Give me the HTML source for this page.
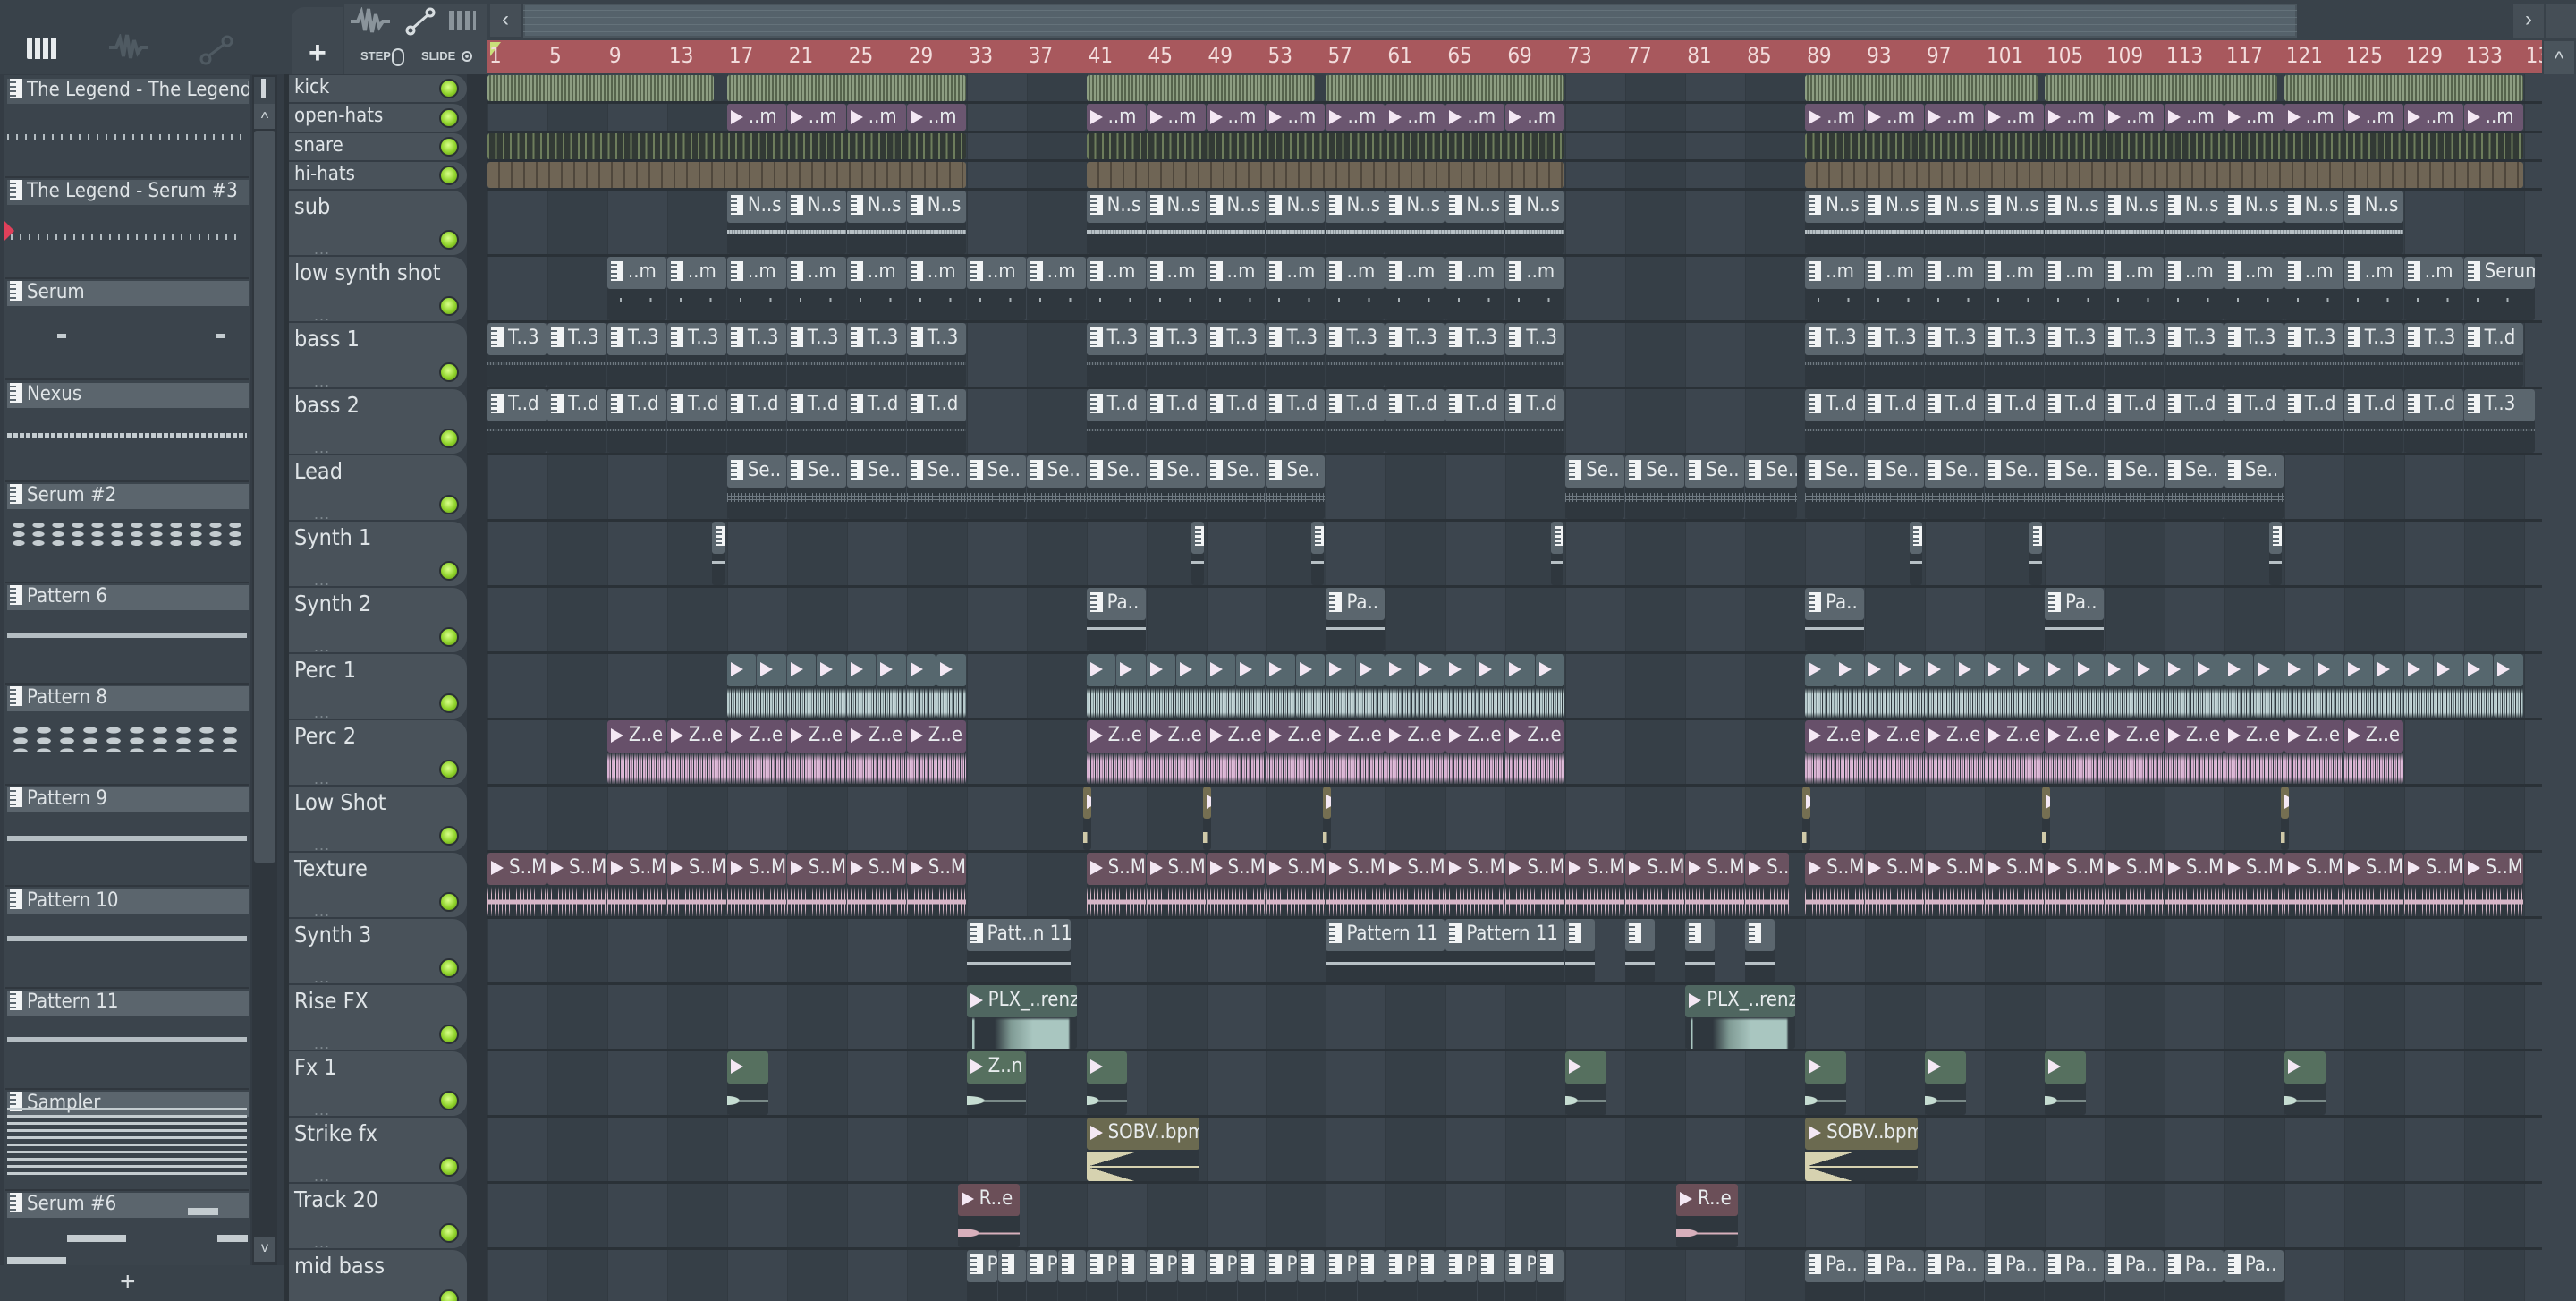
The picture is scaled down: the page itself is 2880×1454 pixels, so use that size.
<!DOCTYPE html>
<html><head><meta charset="utf-8">
<style>
*{margin:0;padding:0;box-sizing:border-box}
html,body{width:2880px;height:1454px;overflow:hidden;background:#343c44;font-family:"Liberation Sans","DejaVu Sans",sans-serif}
#root{position:relative;width:2880px;height:1454px}
.a{position:absolute}
.lbl{color:#dfe4e7;font-size:22px;white-space:nowrap;font-family:"DejaVu Sans Condensed","Liberation Sans Narrow","Liberation Sans",sans-serif}
.clip{position:absolute;overflow:hidden;border-radius:3px}
.ch{position:absolute;left:0;right:0;top:0;height:36px;border-radius:3px;color:#e8ecee;font-size:22px;line-height:34px;padding-left:4px;white-space:nowrap;overflow:hidden;font-family:"DejaVu Sans Condensed","Liberation Sans",sans-serif}
.pi{display:inline-block;width:14px;height:22px;background:#f2f4f5;vertical-align:-4px;margin-right:5px;background-image:repeating-linear-gradient(180deg,#f2f4f5 0 3px,#5b666e 3px 5px);background-size:7px 100%;background-repeat:no-repeat;background-position:left}
.ai{display:inline-block;width:0;height:0;border-top:8px solid transparent;border-bottom:8px solid transparent;border-left:14px solid #f4e8f4;margin-right:6px;vertical-align:-2px}
</style></head><body><div id="root"></div>
<script>
var R=document.getElementById('root');
function el(css,html,cls){var d=document.createElement('div');d.className='a '+(cls||'');d.style.cssText=css;if(html)d.innerHTML=html;R.appendChild(d);return d;}
var GX=545,BW=16.74;
function bx(b){return GX+(b-1)*BW;}
el('left:0;top:0;width:2880px;height:83px;background:#39424a');
el('left:0;top:83px;width:318px;height:1371px;background:#343c44');
el('left:30px;top:42px;width:34px;height:24px;background:#e8ecee;border-radius:2px;background-image:repeating-linear-gradient(90deg,#e8ecee 0 6px,#39424a 6px 9px)');
el('left:120px;top:38px;width:46px;height:30px','<svg width="46" height="30"><path d="M2 15h8l4-10 4 20 4-24 4 26 4-20 4 14 4-6h8" stroke="#4f5a62" stroke-width="4" fill="none"/></svg>');
el('left:222px;top:38px;width:40px;height:36px','<svg width="40" height="36"><circle cx="8" cy="28" r="5" stroke="#4f5a62" stroke-width="3" fill="none"/><circle cx="32" cy="8" r="5" stroke="#4f5a62" stroke-width="3" fill="none"/><path d="M12 24L28 12" stroke="#4f5a62" stroke-width="3"/></svg>');
el('left:326px;top:8px;width:58px;height:75px;background:#3f4850;border-radius:14px 0 0 0');
el('left:345px;top:40px;color:#e8ecee;font-size:34px;font-weight:bold','+');
el('left:385px;top:5px;width:160px;height:78px;background:#414a52');
el('left:390px;top:8px;width:52px;height:32px','<svg width="52" height="32"><path d="M2 16h8l4-10 4 20 4-24 4 26 4-20 4 14 4-6h8" stroke="#8a949b" stroke-width="4" fill="none"/></svg>');
el('left:452px;top:8px;width:36px;height:32px','<svg width="36" height="32"><circle cx="7" cy="26" r="4" stroke="#d7dde0" stroke-width="3" fill="none"/><circle cx="29" cy="6" r="4" stroke="#d7dde0" stroke-width="3" fill="none"/><path d="M10 23L26 9" stroke="#d7dde0" stroke-width="3"/></svg>');
el('left:502px;top:12px;width:30px;height:22px;background:#8a949b;background-image:repeating-linear-gradient(90deg,#8a949b 0 6px,#414a52 6px 9px)');
el('left:403px;top:55px;color:#cfd6da;font-size:13px;font-weight:bold','STEP');
el('left:438px;top:54px;width:14px;height:20px;border:2px solid #cfd6da;border-radius:7px');
el('left:471px;top:55px;color:#cfd6da;font-size:13px;font-weight:bold','SLIDE');
el('left:516px;top:57px;width:12px;height:12px;border:2px solid #cfd6da;border-radius:50%;background:radial-gradient(#cfd6da 30%,transparent 35%)');
el('left:548px;top:5px;width:34px;height:36px;background:#454e56;color:#cfd6da;font-size:24px;text-align:center;line-height:34px','&#x2039;');
el('left:585px;top:4px;width:1983px;height:38px;background:#55626b;border:2px solid #4a555d');
el('left:585px;top:4px;width:1983px;height:38px;background-image:repeating-linear-gradient(180deg,transparent 0 7px,#6b7880 7px 8px);opacity:.7');
el('left:2810px;top:4px;width:34px;height:38px;background:#454e56;color:#cfd6da;font-size:24px;text-align:center;line-height:36px','&#x203A;');
el('left:2846px;top:4px;width:34px;height:38px;background:#454e56');
el('left:545px;top:45px;width:2297px;height:37px;background:#a8585d');
el('left:548px;top:47px;width:0;height:0;border-top:16px solid #c9e07a;border-right:12px solid transparent');
for(var b=1;b<=137;b+=4){var x=bx(b);el('left:'+(x+(b==1?2:2))+'px;top:48px;color:#f2dcdc;font-size:24px;font-family:DejaVu Sans Condensed,Liberation Sans,sans-serif',''+b);}
el('left:2842px;top:45px;width:38px;height:1409px;background:#3a434b');
el('left:2844px;top:46px;width:34px;height:38px;background:#4a545c;color:#cfd6da;font-size:22px;text-align:center;line-height:40px','^');
el('left:2844px;top:86px;width:34px;height:62px;background:#4f5961;border-radius:3px');
el('left:2844px;top:1410px;width:34px;height:40px;background:#4a545c;color:#cfd6da;font-size:22px;text-align:center;line-height:36px','v');
el('left:545px;top:83px;width:2297px;height:1371px;background:#363f47;overflow:hidden');
for(var b=1;b<=137;b+=8){el('left:'+bx(b)+'px;top:83px;width:'+(4*BW)+'px;height:1371px;background:#3c454e');}
for(var b=1;b<=137;b+=4){el('left:'+bx(b)+'px;top:83px;width:1px;height:1371px;background:#323a41');}
el('left:522px;top:83px;width:23px;height:1371px;background:#2e353c');
var tracks=[['kick',83,32],['open-hats',115,33],['snare',148,32],['hi-hats',180,32],['sub',212,74],['low synth shot',286,74],['bass 1',360,74],['bass 2',434,74],['Lead',508,74],['Synth 1',582,74],['Synth 2',656,74],['Perc 1',730,74],['Perc 2',804,74],['Low Shot',878,74],['Texture',952,74],['Synth 3',1026,74],['Rise FX',1100,74],['Fx 1',1174,74],['Strike fx',1248,74],['Track 20',1322,74],['mid bass',1396,74]];
tracks.forEach(function(t){
 el('left:545px;top:'+(t[1]+t[2]-2)+'px;width:2297px;height:3px;background:#2a3137');
 el('left:323px;top:'+(t[1]+1)+'px;width:199px;height:'+(t[2]-2)+'px;background:#49525a;border-radius:0 16px 16px 0');
 el('left:329px;top:'+(t[1]+(t[2]<40?2:4))+'px;font-size:'+(t[2]<40?22:25)+'px','<span>'+t[0]+'</span>','lbl');
 var ly=t[2]<40?t[1]+t[2]/2:t[1]+56;
 el('left:491px;top:'+(ly-11)+'px;width:22px;height:22px;border-radius:50%;background:radial-gradient(circle at 45% 40%,#d8ff8a,#8fd22a 55%,#5b8a18);border:2px solid #2a3036');
 if(t[2]>40)el('left:351px;top:'+(t[1]+56)+'px;color:#7d878e;font-size:18px;letter-spacing:1px','...');
});
var T={};tracks.forEach(function(t){T[t[0]]=t;});
function clip(tn,s,e,st,label,icon){
 var t=T[tn];var x=bx(s),w=(e-s)*BW-1;var y=t[1]+1,h=t[2]-3;
 var d=el('left:'+x+'px;top:'+y+'px;width:'+w+'px;height:'+h+'px;background:'+st.body,'', 'clip');
 if(st.wave){var wv=document.createElement('div');wv.className='a';wv.style.cssText='left:0;right:0;'+st.wave;d.appendChild(wv);}
 if(label!==null&&label!==undefined){var hh=document.createElement('div');hh.className='ch';hh.style.background=st.head;if(t[2]<40){hh.style.height=h+'px';hh.style.lineHeight=h+'px';}
  hh.innerHTML=(icon=='p'?'<span class="pi" style="background-color:#f2f4f5"></span>':'<span class="ai"></span>')+label;d.appendChild(hh);}
 return d;
}
function seq(tn,s,e,step,st,label,icon){for(var b=s;b<e-0.01;b+=step)clip(tn,b,Math.min(b+step,e),st,label,icon);}
var KICK={body:'#65745b',wave:'top:0;bottom:0;background:repeating-linear-gradient(90deg,#8d9e82 0 2px,#55634c 2px 4px)'};
var OH={head:'#6b5670',body:'#6b5670'};
var SN={body:'#323a35',wave:'top:0;bottom:0;background:repeating-linear-gradient(90deg,#6d7d5c 0 2px,transparent 2px 8.4px)'};
var HH={body:'#6f6555',wave:'top:0;bottom:0;background:repeating-linear-gradient(90deg,transparent 0 12px,#4f473c 12px 14px)'};
function line(c,top,hgt){return 'top:'+top+'px;height:'+hgt+'px;background:'+c;}
var SUB={head:'#5b666e',body:'#2f373e',wave:line('repeating-linear-gradient(90deg,#b7c0c5 0 2px,#8a949a 2px 3px)',44,4)};
var LSS={head:'#5b666e',body:'#2f373e',wave:'top:46px;height:4px;background:repeating-linear-gradient(90deg,transparent 0 14px,#aab3b8 14px 16px,transparent 16px 33.5px)'};
var BASS={head:'#5b666e',body:'#2f373e',wave:line('repeating-linear-gradient(90deg,#6e7880 0 1px,#3a434a 1px 3px)',44,3)};
var LEAD={head:'#5b666e',body:'#2f373e',wave:'top:42px;height:10px;background:repeating-linear-gradient(90deg,#707a82 0 1px,transparent 1px 4px),repeating-linear-gradient(180deg,transparent 0 3px,#707a82 3px 4px)'};
var PERC1={head:'#56676e',body:'#2f383e',wave:'top:38px;height:34px;background:repeating-linear-gradient(90deg,#b8cbcd 0 2px,#7a8c90 2px 3px,#c8d8da 3px 4px,transparent 4px 5px);-webkit-mask:linear-gradient(180deg,transparent 0,#000 20%,#000 80%,transparent)'};
var PERC2={head:'#67506a',body:'#2f373e',wave:'top:36px;height:36px;background:repeating-linear-gradient(90deg,#d8b2d2 0 2px,#9c7e98 2px 3px,#e0c0da 3px 4px,transparent 4px 5px);-webkit-mask:linear-gradient(180deg,transparent 0,#000 25%,#000 75%,transparent)'};
var TEX={head:'#6a5260',body:'#2f373e',wave:'top:38px;height:34px;background:linear-gradient(180deg,transparent 42%,#d6b6c6 42% 58%,transparent 58%),repeating-linear-gradient(90deg,#d6b6c6 0 1px,transparent 1px 4px,#d6b6c6 4px 5px,transparent 5px 8px);-webkit-mask:linear-gradient(180deg,transparent 0,#000 25%,#000 75%,transparent)'};
var S1={head:'#5b666e',body:'#2f373e',wave:line('#b7c0c5',44,3)};
var SY3={head:'#5b666e',body:'#2f373e',wave:line('#b7c0c5',48,4)};
var RISE={head:'#4f6660',body:'#2f373e',wave:'top:36px;height:36px;background:linear-gradient(90deg,transparent 5%,#a9c6c0 5% 7%,transparent 7% 25%,#7f9a94 40%,#a9c6c0 60%,#a9c6c0 92%,transparent 94%);-webkit-mask:linear-gradient(180deg,transparent 0,#000 10%,#000 95%)'};
var FX={head:'#56705f',body:'#2f373e',wave:'top:38px;height:34px;background:radial-gradient(ellipse at 0 50%,#c6ddd2 0,#c6ddd2 20%,transparent 22%),linear-gradient(180deg,transparent 48%,#c6ddd2 48% 54%,transparent 54%)'};
var STR={head:'#6b6a50',body:'#2f373e',wave:'top:38px;height:34px;background:linear-gradient(180deg,transparent 47%,#d6d2b0 47% 53%,transparent 53%),linear-gradient(to right bottom,#d6d2b0 50%,transparent 50%) 0 0/45% 50% no-repeat,linear-gradient(to right top,#d6d2b0 50%,transparent 50%) 0 100%/45% 50% no-repeat'};
var T20={head:'#6b4f58',body:'#2f373e',wave:'top:38px;height:34px;background:radial-gradient(ellipse at 10% 50%,#d8b0bc 0,#d8b0bc 18%,transparent 20%),linear-gradient(180deg,transparent 48%,#d8b0bc 48% 54%,transparent 54%)'};
var LS={head:'#756f52',body:'#2f373e',wave:'top:42px;height:30px;background:linear-gradient(to right,#cfc9a8 50%,transparent 50%) 0 50%/100% 40% no-repeat'};
var MB={head:'#5b666e',body:'#2f373e',wave:line('#b7c0c5',62,4)};
[[1,16.2],[17,33],[41,56.3],[57,73],[89,104.6],[105,120.6],[121,137]].forEach(function(r){clip('kick',r[0],r[1],KICK);});
[[17,33],[41,73],[89,137]].forEach(function(r){seq('open-hats',r[0],r[1],4,OH,'..m','a');});
[[1,33],[41,73],[89,137]].forEach(function(r){clip('snare',r[0],r[1],SN);clip('hi-hats',r[0],r[1],HH);});
[[17,33],[41,73],[89,129]].forEach(function(r){seq('sub',r[0],r[1],4,SUB,'N..s','p');});
[[9,73],[89,133]].forEach(function(r){seq('low synth shot',r[0],r[1],4,LSS,'..m','p');});clip('low synth shot',133,137.8,LSS,'Serum','p');
[[1,33],[41,73],[89,133]].forEach(function(r){seq('bass 1',r[0],r[1],4,BASS,'T..3','p');seq('bass 2',r[0],r[1],4,BASS,'T..d','p');});
clip('bass 1',133,137,BASS,'T..d','p');clip('bass 2',133,137.8,BASS,'T..3','p');
[[17,57],[73,88.5],[89,121]].forEach(function(r){seq('Lead',r[0],r[1],4,LEAD,'Se..','p');});
[16,48,56,72,96,104,120].forEach(function(b){clip('Synth 1',b,b+0.9,S1,'','p');});
[41,57,89,105].forEach(function(b){clip('Synth 2',b,b+4,S1,'Pa..','p');});
[[17,33],[41,73],[89,137]].forEach(function(r){seq('Perc 1',r[0],r[1],2,PERC1,'','a');});
[[9,33],[41,73],[89,129]].forEach(function(r){seq('Perc 2',r[0],r[1],4,PERC2,'Z..e','a');});
[40.8,48.8,56.8,88.8,104.8,120.8].forEach(function(b){clip('Low Shot',b,b+0.6,LS,'','a');});
[[1,33],[41,88],[89,137]].forEach(function(r){seq('Texture',r[0],r[1],4,TEX,'S..M','a');});
clip('Synth 3',33,40,SY3,'Patt..n 11','p');clip('Synth 3',57,65,SY3,'Pattern 11','p');clip('Synth 3',65,73,SY3,'Pattern 11','p');
[73,77,81,85].forEach(function(b){clip('Synth 3',b,b+2,SY3,'','p');});
clip('Rise FX',33,40.4,RISE,'PLX_..renz','a');clip('Rise FX',81,88.4,RISE,'PLX_..renz','a');
[[17,19.8],[33,37],[41,43.8],[73,75.8],[89,91.8],[97,99.8],[105,107.8],[121,123.8]].forEach(function(r){clip('Fx 1',r[0],r[1],FX,r[0]==33?'Z..n':'','a');});
clip('Strike fx',41,48.6,STR,'SOBV..bpm','a');clip('Strike fx',89,96.6,STR,'SOBV..bpm','a');
clip('Track 20',32.4,36.6,T20,'R..e','a');clip('Track 20',80.4,84.6,T20,'R..e','a');
for(var b=33;b<73;b+=4){clip('mid bass',b,b+2.1,MB,'Pa..','p');clip('mid bass',b+2.1,b+4,MB,'','p');}
for(var b=89;b<121;b+=4)clip('mid bass',b,b+4,MB,'Pa..','p');
el('left:4px;top:84px;width:276px;height:1330px;background:#3b444c');
var items=['The Legend - The Legend','The Legend - Serum #3','Serum','Nexus','Serum #2','Pattern 6','Pattern 8','Pattern 9','Pattern 10','Pattern 11','Sampler','Serum #6'];
items.forEach(function(n,i){var y=88+i*113.2;
 el('left:6px;top:'+(y+109)+'px;width:272px;height:2px;background:#30373e');
 el('left:8px;top:'+y+'px;width:270px;height:28px;background:'+(i<2?'#4f5961':'#5b656d')+';overflow:hidden','<span class="pi" style="margin-left:3px;vertical-align:-3px"></span>'+n,'lbl');
});
el('left:8px;top:150px;width:265px;height:6px;background:repeating-linear-gradient(90deg,#b4bdc2 0 2px,transparent 2px 10px)');
el('left:12px;top:262px;width:260px;height:6px;background:repeating-linear-gradient(90deg,#b4bdc2 0 2px,transparent 2px 10px)');
el('left:4px;top:246px;width:0;height:0;border-top:12px solid transparent;border-bottom:12px solid transparent;border-left:12px solid #e0405a');
el('left:64px;top:373px;width:10px;height:5px;background:#c4ccd0');el('left:242px;top:373px;width:10px;height:5px;background:#c4ccd0');
el('left:8px;top:484px;width:268px;height:5px;background:repeating-linear-gradient(90deg,#c4ccd0 0 5px,transparent 5px 7px)');
el('left:10px;top:582px;width:260px;height:30px;background:radial-gradient(#c4ccd0 40%,transparent 45%) 0 0/22px 10px');
el('left:8px;top:708px;width:268px;height:5px;background:#b4bdc2');
el('left:10px;top:810px;width:260px;height:30px;background:radial-gradient(#c4ccd0 40%,transparent 45%) 0 0/26px 12px');
el('left:8px;top:934px;width:268px;height:6px;background:#b4bdc2');
el('left:8px;top:1046px;width:268px;height:6px;background:#b4bdc2');
el('left:8px;top:1159px;width:268px;height:6px;background:#b4bdc2');
el('left:8px;top:1238px;width:268px;height:80px;background:repeating-linear-gradient(180deg,#c4ccd0 0 3px,transparent 3px 8px)');
el('left:210px;top:1350px;width:34px;height:8px;background:#c4ccd0');el('left:75px;top:1380px;width:66px;height:8px;background:#c4ccd0');el('left:243px;top:1380px;width:34px;height:8px;background:#c4ccd0');el('left:8px;top:1405px;width:66px;height:8px;background:#c4ccd0');
el('left:282px;top:84px;width:28px;height:1330px;background:#2f363d');
el('left:284px;top:86px;width:24px;height:30px;background:#3e474f');el('left:292px;top:88px;width:5px;height:22px;background:#d0d6da');
el('left:284px;top:116px;width:24px;height:28px;background:#4a535b;color:#cfd6da;font-size:18px;text-align:center;line-height:32px','^');
el('left:284px;top:146px;width:24px;height:818px;background:#4a535b;border-radius:3px');
el('left:284px;top:1382px;width:24px;height:28px;background:#4a535b;color:#cfd6da;font-size:16px;text-align:center;line-height:26px','v');
el('left:0;top:1414px;width:318px;height:40px;background:#39424a');
el('left:134px;top:1416px;color:#d8dde0;font-size:30px','+');
el('left:318px;top:83px;width:5px;height:1371px;background:#2c3339');
</script></body></html>
